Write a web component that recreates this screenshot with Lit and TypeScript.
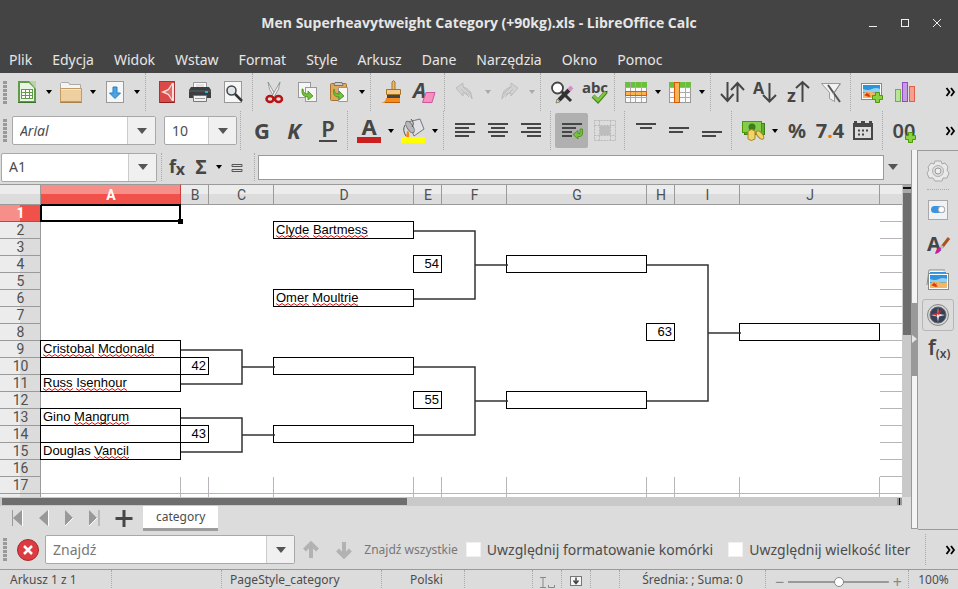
import { LitElement, html, svg, css, nothing, TemplateResult } from "lit";
import { customElement, property } from "lit/decorators.js";
import { classMap } from "lit/directives/class-map.js";

const photo = svg`
  <rect x="1.5" y="3.5" width="20" height="16" fill="#fff" stroke="#8a8a8a"/>
  <rect x="3" y="5" width="17" height="13" fill="#2f93dc"/>
  <path d="M3 9q5 2 9 0t8 0v3H3z" fill="#8fd0f5"/>
  <path d="M3 13q5-2 9-1t8 0v6H3z" fill="#f2b765"/>
  <path d="M7 12l1 2 2-1-1 2 2 1-2 1-3-1-2-1 2-1z" fill="#e03a10"/>`;
const plus = (x: number, y: number) => svg`
  <path transform="translate(${x} ${y})" d="M3.500.5h4v3h3v4h-3v3h-4v-3h-3v-4h3z" fill="#8ad045" stroke="#4e9a06"/>`;
const gridLines = svg`<path d="M1.500 7.500h21M1.500 12.500h21M1.500 17.500h21M6.500 2v20M11.500 2v20M17.500 2v20" stroke="#aaa" fill="none"/>`;

const ICONS: Record<string, TemplateResult> = {
  newsheet: svg`<rect x="3" y="1" width="18" height="22" fill="#5f9b49"/><path d="M5 3h9l5 5v13H5z" fill="#e9f4e2"/>
    <path d="M14 1h7v8z" fill="#b5d8a2"/><rect x="6.500" y="9.500" width="11" height="9" fill="#fff" stroke="#5f9b49"/>
    <path d="M6 12.500h12M6 15.500h12M10.500 9v10M14.500 9v10" stroke="#5f9b49"/><path d="M3 22.500h18" stroke="#3c6e2c"/>`,
  folder: svg`<path d="M1.500 22V3.500l1-1h7l1 2h11V10" fill="#f4f4f4" stroke="#aaa"/><path d="M1.500 8.500h21v13h-21z" fill="#edcfa0" stroke="#c39a60"/>
    <path d="M2 9.500h20" stroke="#f9e6c8"/><path d="M1 22.500h22" stroke="#a9834e"/>`,
  save: svg`<rect x="3.500" y="1.500" width="17" height="21" fill="#f6f6f6" stroke="#999"/><path d="M10 7h4v6h3.500L12 18.500 6.500 13H10z" fill="#4aa3e6" stroke="#2b7fc0"/>`,
  pdf: svg`<rect x="4.500" y="1.500" width="15" height="21" fill="#dc4a48" stroke="#a33"/><path d="M17 3h2v18h-2l-4-6-7-3 7-3z" fill="#f6dede"/><path d="M17 5v14l-3-5-4-2 4-2z" fill="#e26a68"/>
    <path d="M5 22.500h14" stroke="#822"/>`,
  print: svg`<path d="M5.500 9V2.500h13V9" fill="#fafafa" stroke="#999"/><path d="M8 5h8M8 7h8" stroke="#ccc"/><path d="M3 7h18l2 3v8H1v-8z" fill="#3b3f42"/><path d="M1 11h22" stroke="#5d6265"/>
    <rect x="17" y="11" width="3" height="2" fill="#1db7ee"/><path d="M5.500 15.500h13v6h-13z" fill="#f2f2f2" stroke="#777"/><path d="M7 18.500h10" stroke="#999"/>`,
  preview: svg`<rect x="3.500" y="1.500" width="17" height="21" fill="#f6f6f6" stroke="#999"/><circle cx="10.500" cy="10.500" r="4.500" fill="#dfe6ea" stroke="#444" stroke-width="1.500"/><path d="M14 14l7 7" stroke="#333" stroke-width="2.500"/>`,
  cut: svg`<path d="M6 2l8 14-2 1q-6-8-6-15z" fill="#eee" stroke="#888" stroke-width=".8"/><path d="M18 2l-8 14 2 1q6-8 6-15z" fill="#eee" stroke="#888" stroke-width=".8"/>
    <ellipse cx="8" cy="19" rx="3.500" ry="3" fill="none" stroke="#b81414" stroke-width="2.500"/><ellipse cx="16.500" cy="19" rx="3.500" ry="3" fill="none" stroke="#b81414" stroke-width="2.500"/>`,
  copy: svg`<rect x="3.500" y="2.500" width="12" height="15" fill="#f6f6f6" stroke="#999"/><rect x="10.500" y="7.500" width="11" height="14" fill="#f6f6f6" stroke="#999"/>
    <path d="M8 9q0 5 5 5v-3l5 5-5 4v-3q-7 0-6-8z" fill="#73c13c" stroke="#478a1a" stroke-width=".8"/>`,
  paste: svg`<rect x="2.500" y="3.500" width="16" height="17" rx="1" fill="#dfa95c" stroke="#a5732b"/><path d="M7 2.500h7l1 3H6z" fill="#ccc" stroke="#777"/><path d="M10.500 7.500h9l0 14h-9z" fill="#f6f6f6" stroke="#999"/>
    <path d="M6 9q0 5 5 5v-3l5 5-5 4v-3q-7 0-5-8z" fill="#73c13c" stroke="#478a1a" stroke-width=".8"/>`,
  brush: svg`<path d="M12 9V2q1.500-3 3 0v7" fill="#f0b96a" stroke="#a5732b"/><path d="M6.500 9.500h14v5h-14z" fill="#f3c987" stroke="#a5732b"/><rect x="7" y="15" width="13" height="3" fill="#444"/>
    <path d="M6 18h14v5H1q5-1 5-5z" fill="#f58a1f"/><path d="M5 22.500h15" stroke="#b85b0a"/>`,
  eraser: svg`<text x="0" y="18" font-size="21" class="t" font-style="italic">A</text><path d="M13 12.500h9l-3 10H9.500z" fill="#f48fc0" stroke="#d0559a"/>`,
  undo: svg`<path d="M2 8l7-5v4q9 2 9 12-2-6-9-6v3z" fill="#d2d2d2" stroke="#bbb"/><path d="M7 9l8 8M9 7l8 7" stroke="#bbb"/>`,
  redo: svg`<path d="M20 8l-7-5v4q-9 2-9 12 2-6 9-6v3z" fill="#d2d2d2" stroke="#bbb"/><path d="M15 9l-8 8M13 7l-8 7" stroke="#bbb"/>`,
  find: svg`<path d="M11 11l10 10" stroke="#333" stroke-width="3"/><circle cx="7.500" cy="8" r="5.500" fill="#fff" stroke="#444" stroke-width="1.800"/><path d="M19 10L9 20" stroke="#333" stroke-width="4"/><path d="M22 7l-3 3" stroke="#d58fc6" stroke-width="4"/><path d="M6 23l1-4 3 3z" fill="#eed27a" stroke="#555" stroke-width=".6"/>`,
  abc: svg`<text x="12" y="13" text-anchor="middle" font-size="15" class="t">abc</text><path d="M10 16l5 5 8-9" stroke="#458418" stroke-width="4" fill="none"/><path d="M10.500 16l4.500 4.500 7.500-8.500" stroke="#7dc742" stroke-width="2.500" fill="none"/>`,
  rows: svg`<rect x="1.500" y="2.500" width="21" height="20" fill="#fafafa" stroke="#999"/><rect x="1" y="2" width="22" height="5" fill="#6cbf3a"/>${gridLines}<rect x="1.500" y="11.500" width="21" height="4" fill="#f8b355" stroke="#dc5a00"/><path d="M6.500 12v3M11.500 12v3M17.500 12v3" stroke="#dc8a30"/>`,
  cols: svg`<rect x="1.500" y="2.500" width="21" height="20" fill="#fafafa" stroke="#999"/><rect x="1" y="2" width="22" height="5" fill="#6cbf3a"/>${gridLines}<rect x="6.500" y="2.500" width="5" height="20" fill="#f8b355" stroke="#dc5a00"/>`,
  sort: svg`<path d="M7.500 2v19M1 14l6.500 7 6-7M17.500 22V3M11 10l6.500-7 6.500 7" class="s2"/>`,
  sortaz: svg`<text x="0" y="14" font-size="16" class="t">A</text><path d="M16.500 3v18M10 15l6.500 6.500 6.500-6.500" class="s2"/>`,
  sortza: svg`<text x="1" y="22" font-size="18" class="t">z</text><path d="M16.500 22V2M10 8l6.500-6 6.500 6" class="s2"/>`,
  filter: svg`<path d="M2.500 3.500h19l-6 9v9l-5-3v-6z" fill="#f3f3f3" stroke="#999"/><path d="M9 5l12 17" stroke="#555" stroke-width="2"/><path d="M21 4l-7 10" stroke="#888"/>`,
  image: svg`${photo}${plus(12, 12)}`,
  chart: svg`<rect x="2.500" y="9.500" width="5" height="12" fill="#b9e29a" stroke="#6ab23a"/><rect x="9.500" y="2.500" width="5" height="19" fill="#c79be4" stroke="#8d4fbf"/><rect x="16.500" y="6.500" width="5" height="15" fill="#f5a090" stroke="#e0604a"/>`,
  bold: svg`<text x="12" y="20" text-anchor="middle" font-size="22" class="t">G</text>`,
  italic: svg`<text x="11" y="20" text-anchor="middle" font-size="22" class="t" font-style="italic">K</text>`,
  underline: svg`<text x="12" y="18" text-anchor="middle" font-size="22" class="t semi">P</text><path d="M3 22h18" stroke="#464646" stroke-width="2"/>`,
  color: svg`<text x="12" y="16" text-anchor="middle" font-size="22" class="t">A</text><rect x="0" y="18" width="24" height="6" fill="#cc1f1f"/>`,
  fill: svg`<path d="M7 3l12-3 4 10-10 7z" fill="#e2e2e6" stroke="#777"/><ellipse cx="9" cy="8" rx="3" ry="6.500" transform="rotate(-32 9 8)" fill="#b8b8bc" stroke="#777"/><path d="M4 6q-3 5 1 11M10 0q4 4 1 8" fill="none" stroke="#555"/><path d="M6 12q3 0 2 6H5z" fill="#f5851f"/><rect x="0" y="18" width="24" height="6" fill="#ff0"/>`,
  left: svg`<path d="M2 5h20M2 9h14M2 13h20M2 17h14" class="s2"/>`,
  center: svg`<path d="M2 5h20M5 9h14M2 13h20M5 17h14" class="s2"/>`,
  right: svg`<path d="M2 5h20M8 9h14M2 13h20M8 17h14" class="s2"/>`,
  wrap: svg`<path d="M2 5h20M2 9h14M2 13h10M2 17h10" class="s2"/><path d="M20 10h2.500v5q0 2-2.500 2.500h-2v2.500l-5-4.500 5-4v3h2z" fill="#73c13c" stroke="#478a1a" stroke-width=".8"/>`,
  merge: svg`<path d="M1.500 1.500h21v20h-21zM1.500 6.500h21M1.500 16.500h21M6.500 1.500v20M17.500 1.500v20" fill="none" stroke="#b8b8b8" stroke-dasharray="2 1"/><rect x="7" y="7" width="10" height="9" fill="#bdbdbd"/>`,
  top: svg`<path d="M2 5h20M6 9h12" class="s2"/>`,
  middle: svg`<path d="M2 9h20M2 13h14" class="s2"/>`,
  bottom: svg`<path d="M2 13h20M2 17h14" class="s2"/>`,
  money: svg`<rect x="3.500" y="4.500" width="20" height="11" fill="#5fae2e" stroke="#3f7d1a"/><rect x="1.500" y="2.500" width="19" height="11" fill="#83cc4c" stroke="#4e9a06"/><circle cx="11" cy="8" r="3.500" fill="#3f7d1a"/>
    <path d="M7 12q4-3 7 0v8q-4 3-7 0z" fill="#f0d568" stroke="#a8862a"/><ellipse cx="19" cy="16" rx="2.500" ry="5" transform="rotate(-40 19 16)" fill="#f0d568" stroke="#a8862a"/>`,
  percent: svg`<text x="12" y="19" text-anchor="middle" font-size="20" class="t">%</text>`,
  number: svg`<text x="12" y="19" text-anchor="middle" font-size="20" class="t">7<tspan fill="#f57900">.</tspan>4</text>`,
  date: svg`<path d="M3 3.500h3M18 3.500h3M10 3.500h4" stroke="#464646" stroke-width="3"/><rect x="3" y="5" width="18" height="15" fill="#dcdcdc" stroke="#464646" stroke-width="2"/><path d="M2 6h20" stroke="#464646" stroke-width="4"/><path d="M7 11.500h11M7 15.500h8" stroke="#464646" stroke-width="2" stroke-dasharray="2 2"/>`,
  decimals: svg`<text x="12" y="19" text-anchor="middle" font-size="20" class="t semi">00</text>${plus(13, 13)}`,
  gear: svg`<path d="M9 2h6l1 3 3-1 3 4-1 3 2 3-2 5-4 0-1 3H9l-2-3-4 0-2-5 2-3-1-3 3-4 3 1z" fill="#e9e9e9" stroke="#a8a8a8"/><circle cx="12" cy="12" r="5.500" fill="#ddd" stroke="#b0b0b0"/><circle cx="12" cy="12" r="3" fill="#eee" stroke="#999"/>`,
  toggle: svg`<rect x="2.500" y="2.500" width="19" height="19" fill="#f0f2f4" stroke="#a8a8a8"/><rect x="5" y="8" width="14" height="7" rx="3.500" fill="#3d93e0"/><circle cx="15.500" cy="11.500" r="3.200" fill="#fff" stroke="#aaa"/>`,
  styles: svg`<text x="1" y="18" font-size="20" class="t">A</text><path d="M23 5l-7 9" stroke="#a8551d" stroke-width="3"/><path d="M17 13l-3 3" stroke="#bbb" stroke-width="3"/><path d="M15 15q0 5-6 6 1-5 4-7z" fill="#c4209a"/>`,
  gallery: svg`<path d="M1 17L3 2h16" fill="#fff" stroke="#888"/><path d="M4 4h16v6H4z" fill="#2f93dc"/><g transform="translate(1 2)">${photo}</g>`,
  compass: svg`<circle cx="12" cy="12" r="10.500" fill="#d4d6d8" stroke="#888"/><circle cx="12" cy="12" r="8" fill="#39415a" stroke="#666"/><path d="M12 5l1 6 6 1-6 1.500-1 5.500-1-5.500-6-1.500 6-1z" fill="#e8e8e8"/><path d="M16 6l-3 6-2-1zM12 5l1 6h-2zM6 11l5-1v3z" fill="#cf2b2b"/>`,
  functions: svg`<text x="2" y="17" font-size="21" class="t semi">f<tspan font-size="12" dy="3">(x)</tspan></text>`,
  fx: svg`<text x="12" y="18" text-anchor="middle" font-size="18" class="t">f<tspan font-size="16" dy="2">x</tspan></text>`,
  sum: svg`<text x="12" y="19" text-anchor="middle" font-size="19" class="t">Σ</text>`,
  equals: svg`<path d="M7 9.500h10v2H7zM7 14.500h10v2H7z" fill="none" stroke="#555"/>`,
  first: svg`<path d="M4.500 4v16" stroke="#999"/><path d="M14 4v16L5 12z" fill="#999"/><path d="M14.500 4v16" stroke="#fff"/>`,
  prev: svg`<path d="M15 4v16L6 12z" fill="#999"/><path d="M15.500 4v16" stroke="#fff"/>`,
  next: svg`<path d="M7 4v16l8-8z" fill="#999"/><path d="M7 20l8-8" stroke="#fff"/>`,
  last: svg`<path d="M6 4v16l8-8z" fill="#999"/><path d="M6 20l8-8" stroke="#fff"/><path d="M16 4v16" stroke="#999"/>`,
  add: svg`<path d="M12 4v17M3.500 12.500h17" stroke="#464646" stroke-width="3"/>`,
  close: svg`<circle cx="12" cy="12" r="10.500" fill="#dd3a41" stroke="#a52a30"/><path d="M8 8l8 8M16 8l-8 8" stroke="#fff" stroke-width="2.500"/>`,
  up: svg`<path d="M12 20V6M5.500 12L12 5.500 18.500 12" stroke="#b2b2b2" stroke-width="4" fill="none"/>`,
  down: svg`<path d="M12 4v14M5.500 12l6.500 6.500 6.500-6.500" stroke="#b2b2b2" stroke-width="4" fill="none"/>`,
  minimize: svg`<path d="M8 15.500h8" stroke="#eee"/>`,
  maximize: svg`<rect x="8.500" y="8.500" width="7" height="7" fill="none" stroke="#eee"/>`,
  exit: svg`<path d="M8 8l8 8M16 8l-8 8" stroke="#eee"/>`,
  cursor: svg`<path d="M5 7.500h6M8 8v9M5 17.500h6M13.500 15v2.500h6V15" stroke="#888" fill="none"/>`,
  saved: svg`<rect x="6.500" y="6.500" width="11" height="9" fill="#f4f4f4" stroke="#777"/><path d="M12 7.500v5M9.500 10.500l2.500 3 2.500-3" stroke="#444" stroke-width="1.500" fill="none"/>`,
};

const shared = css`
  * { box-sizing: border-box; }
  button, input, select { font: inherit; color: inherit; margin: 0; padding: 0; border: 0; background: none; border-radius: 0; }
  svg { display: block; flex: none; overflow: visible; }
  .t { font-family: "Noto Sans", "Open Sans", sans-serif; font-weight: 700; fill: #464646; }
  .semi { font-weight: 600; }
  .s2 { stroke: #464646; stroke-width: 2; fill: none; }
`;

const icon = (name: string) => html`<svg width="24" height="24" viewBox="0 0 24 24" aria-hidden="true">${ICONS[name]}</svg>`;
const caret = html`<svg width="10" height="6" viewBox="0 0 10 6" aria-hidden="true"><path d="M0 0h10L5 6z" fill="#555"/></svg>`;
const more = html`<button class="more" aria-label="Więcej"><svg width="9" height="8" viewBox="0 0 9 8"><path d="M.5 0L3.500 4 .5 8M5 0l3 4-3 4" fill="none" stroke="#000" stroke-width="1.800"/></svg></button>`;

type Tool = { name: string; label: string; menu?: boolean; off?: boolean; on?: boolean };
const t = (name: string, label: string, extra: Partial<Tool> = {}): Tool => ({ name, label, ...extra });
const menu = { menu: true };

@customElement("tool-group")
class ToolGroup extends LitElement {
  @property({ attribute: false }) groups: Tool[][] = [];
  static styles = [shared, css`
    :host { display: flex; align-items: stretch; min-width: 0; overflow: hidden; flex: 1; }
    .group { display: flex; align-items: center; flex: none; }
    .group + .group { border-left: 1px dotted #aaa; margin-left: 3px; padding-left: 4px; }
    .tool { width: 33px; height: 35px; display: flex; align-items: center; justify-content: center; border-radius: 2px; }
    .on { background: #b0b0b0; }
    .drop { width: 11px; height: 35px; display: flex; align-items: center; justify-content: center; color: #000; }
    .off { color: #aaa; }
  `];
  render() {
    return this.groups.map((g) => html`<div class="group">${g.map((x) => html`
      <button class=${classMap({ tool: true, on: !!x.on })} aria-label=${x.label} ?disabled=${x.off}>${icon(x.name)}</button>
      ${x.menu ? html`<button class=${classMap({ drop: true, off: !!x.off })} aria-label="${x.label} – opcje">
        <svg width="6" height="4" viewBox="0 0 6 4"><path d="M0 0h6L3 4z" fill="currentColor"/></svg></button>` : nothing}`)}
    </div>`);
  }
}

type Cell = { text?: string; bad?: string[]; num?: boolean };
const COLS = "ABCDEFGHIJ".split("");
const ROWS = Array.from({ length: 17 }, (_, i) => i + 1);
const CELLS: Record<string, Cell> = {
  D2: { text: "Clyde Bartmess", bad: ["Clyde", "Bartmess"] },
  E4: { text: "54", num: true },
  G4: {},
  D6: { text: "Omer Moultrie", bad: ["Omer", "Moultrie"] },
  H8: { text: "63", num: true },
  J8: {},
  A9: { text: "Cristobal Mcdonald", bad: ["Cristobal", "Mcdonald"] },
  A10: {},
  B10: { text: "42", num: true },
  D10: {},
  A11: { text: "Russ Isenhour", bad: ["Russ", "Isenhour"] },
  E12: { text: "55", num: true },
  G12: {},
  A13: { text: "Gino Mangrum", bad: ["Mangrum"] },
  A14: {},
  B14: { text: "43", num: true },
  D14: {},
  A15: { text: "Douglas Vancil", bad: ["Vancil"] },
};

@customElement("sheet-grid")
class SheetGrid extends LitElement {
  static styles = [shared, css`
    :host { display: block; position: relative; background: #fff; overflow: hidden; }
    table { width: 100%; table-layout: fixed; border-collapse: separate; border-spacing: 0; }
    .rowhead { width: 41px; }
    .wide { width: 140px; }
    .thin { width: 28px; }
    .mid { width: 65px; }
    th { font: 400 14px/16px Roboto, "Noto Sans", sans-serif; color: #505050; padding: 0 0 0 1px; text-align: center; border-right: 1px solid #9a9a9a; border-bottom: 1px solid #9a9a9a; }
    thead th { height: 21px; border-top: 1px solid #9a9a9a; background: linear-gradient(#ececec 50%, #dcdcdc 50%); }
    thead th:last-child { border-right: 0; }
    tbody th { height: 17px; background: linear-gradient(90deg, #ececec 50%, #dcdcdc 50%); }
    thead .sel { background: linear-gradient(#f68e8a 50%, #f0524b 50%); color: #fff; font-weight: 700; border-right-color: #c8403a; }
    tbody .sel { background: linear-gradient(90deg, #f68e8a 50%, #f0524b 50%); color: #fff; font-weight: 700; border-bottom-color: #c8403a; }
    td { padding: 0 2px; height: 17px; font: 13px/15px "Liberation Sans", Arial, sans-serif; color: #000; white-space: nowrap; vertical-align: top; }
    .edge { border-bottom: 1px solid #b9b4b9; }
    .plain { border-right: 1px solid #b9b4b9; border-bottom: 1px solid #b9b4b9; }
    .box { border-right: 1px solid #000; border-bottom: 1px solid #000; box-shadow: -1px 0 #000, 0 -1px #000, -1px -1px #000; }
    .num { text-align: right; }
    .bad {
      padding-bottom: 1px;
      background: url("data:image/svg+xml,%3Csvg xmlns='http://www.w3.org/2000/svg' width='6' height='3'%3E%3Cpath d='M-1 -.2L0 .5L3 2.500L6 .5L7 -.2' fill='none' stroke='%23e61414'/%3E%3C/svg%3E") left bottom repeat-x;
    }
    .cursor { position: relative; border-right: 2px solid #000; border-bottom: 2px solid #000; box-shadow: -1px 0 #000, 0 -1px #000, inset 1px 1px #000; }
    .cursor::after { content: ""; position: absolute; right: -4px; bottom: -4px; width: 5px; height: 5px; background: #000; }
    .rest th, .rest td { height: 3px; line-height: 0; border-bottom: 0; }
    .links { position: absolute; left: 0; top: 0; pointer-events: none; }
    .links path { fill: none; stroke: #333; stroke-width: 1.5; }
  `];
  cell(id: string, row: number) {
    const c = CELLS[id];
    const words = c?.text?.split(" ") ?? [];
    return html`<td class=${classMap({ box: !!c, num: !!c?.num, cursor: id === "A1", plain: row >= 17 })}>${words.map((w, i) =>
      html`${i ? " " : ""}${c!.bad?.includes(w) ? html`<span class="bad">${w}</span>` : w}`)}</td>`;
  }
  render() {
    const size = ["wide", "thin", "mid", "wide", "thin", "mid", "wide", "thin", "mid", "wide"];
    return html`
      <table>
        <colgroup><col class="rowhead">${size.map((s) => html`<col class=${s}>`)}<col></colgroup>
        <thead><tr><th></th>${COLS.map((c) => html`<th class=${c === "A" ? "sel" : ""} scope="col">${c}</th>`)}<th></th></tr></thead>
        <tbody>
          ${ROWS.map((r) => html`<tr><th class=${r === 1 ? "sel" : ""} scope="row">${r}</th>${COLS.map((c) => this.cell(c + r, r))}<td class="edge"></td></tr>`)}
          <tr class="rest"><th></th>${COLS.map(() => html`<td class="plain"></td>`)}<td></td></tr>
        </tbody>
      </table>
      <svg class="links" width="902" height="313" viewBox="0 0 902 313" aria-hidden="true">
        <path d="M181 166H242V200H181M242 183H275M181 234H242V268H181M242 251H275
          M414 47H475V115H414M475 81H508M414 183H475V251H414M475 217H508M647 81H708V217H647M708 149H741"/>
      </svg>`;
  }
}

const MAIN: Tool[][] = [
  [t("newsheet", "Nowy", menu), t("folder", "Otwórz", menu), t("save", "Zapisz", menu)],
  [t("pdf", "Eksportuj jako PDF"), t("print", "Drukuj"), t("preview", "Podgląd wydruku")],
  [t("cut", "Wytnij"), t("copy", "Kopiuj"), t("paste", "Wklej", menu)],
  [t("brush", "Klonuj formatowanie"), t("eraser", "Wyczyść formatowanie")],
  [t("undo", "Cofnij", { menu: true, off: true }), t("redo", "Ponów", { menu: true, off: true })],
  [t("find", "Znajdź i zamień"), t("abc", "Pisownia")],
  [t("rows", "Wiersz", menu), t("cols", "Kolumna", menu)],
  [t("sort", "Sortuj"), t("sortaz", "Sortuj rosnąco"), t("sortza", "Sortuj malejąco"), t("filter", "Autofiltr")],
  [t("image", "Obraz"), t("chart", "Wykres")],
];
const FORMAT: Tool[][] = [
  [],
  [t("bold", "Pogrubienie"), t("italic", "Kursywa"), t("underline", "Podkreślenie")],
  [t("color", "Kolor czcionki", menu), t("fill", "Kolor tła", menu)],
  [t("left", "Do lewej"), t("center", "Wyśrodkuj"), t("right", "Do prawej")],
  [t("wrap", "Zawijaj tekst", { on: true }), t("merge", "Scal komórki", { off: true })],
  [t("top", "Do góry"), t("middle", "Wyśrodkuj w pionie"), t("bottom", "Do dołu")],
  [t("money", "Waluta", menu), t("percent", "Procent"), t("number", "Liczba"), t("date", "Data")],
  [t("decimals", "Dodaj miejsce dziesiętne")],
];
const MENUS = ["Plik", "Edycja", "Widok", "Wstaw", "Format", "Style", "Arkusz", "Dane", "Narzędzia", "Okno", "Pomoc"];

@customElement("app-root")
class AppRoot extends LitElement {
  static styles = [shared, css`
    :host { display: flex; flex-direction: column; min-height: 100vh; background: #dcdcdc; color: #4c4c4c; font: 14px/20px "Noto Sans", "Open Sans", sans-serif; overflow: hidden; }
    .title { height: 46px; background: #444; color: #e6e6e6; display: grid; grid-template-columns: 104px 1fr 104px; align-items: center; }
    .title h1 { margin: 0; font: 700 14px/20px "Open Sans", "Noto Sans", sans-serif; text-align: center; white-space: nowrap; }
    .wins { display: flex; gap: 8px; justify-content: flex-end; padding-right: 9px; }
    .menus { height: 27px; background: #444; color: #e6e6e6; display: flex; gap: 20px; padding: 0 9px; align-items: center; }
    .bar { display: flex; height: 39px; padding: 0 3px; }
    .bar.main { height: 38px; }
    .grip { flex: none; width: 4px; height: 23px; align-self: center; background: repeating-linear-gradient(#999 0 3px, #dcdcdc 3px 4px); }
    .main .grip { margin-right: 3px; }
    .more { flex: none; width: 10px; display: flex; align-items: center; justify-content: center; }
    .combo { display: flex; height: 29px; border: 1px solid #a8a8a8; border-radius: 2px; background: #fff; align-self: center; flex: none; }
    .combo select, .combo input { appearance: none; flex: 1; min-width: 0; padding: 0 7px; outline: 0; }
    .combo input::placeholder { color: #777; opacity: 1; }
    .combo .arrow { width: 28px; display: flex; align-items: center; justify-content: center; border-left: 1px solid #ccc; background: #f0f0f0; pointer-events: none; }
    .font { width: 144px; margin: 0 8px 0 5px; font-style: italic; }
    .size { width: 73px; }
    .work { display: flex; align-items: stretch; }
    .left { flex: 1; min-width: 0; }
    .formula { display: flex; height: 34px; align-items: center; padding: 0 9px 0 1px; }
    .formula .combo { width: 156px; }
    .tools { display: flex; align-items: center; height: 28px; margin: 0 3px 0 4px; padding: 0 5px 0 3px; border-left: 1px dotted #aaa; border-right: 1px dotted #aaa; }
    .tools button { width: 24px; display: flex; justify-content: center; }
    .tools .drop { width: 12px; }
    .line { flex: 1; min-width: 0; height: 25px; border: 1px solid #9a9a9a; background: #fff; }
    .expand { width: 18px; display: flex; justify-content: center; }
    .sheet { display: flex; }
    .sheet sheet-grid { flex: 1; min-width: 0; }
    .vbar { width: 9px; background: #c9c9c9; display: flex; flex-direction: column; padding-left: 1px; border-top: 1px solid #9a9a9a; }
    .vbar::before { content: ""; height: 8px; background: linear-gradient(#aaa 2px, #111 2px 4px, #aaa 4px); }
    .vbar i { height: 142px; background: #6e6e6e; }
    .hbar { height: 9px; display: flex; margin-right: 9px; background: #c9c9c9; padding: 1px 0 1px 2px; justify-content: space-between; }
    .hbar i { width: 45%; background: #6e6e6e; }
    .hbar b { width: 5px; background: linear-gradient(90deg, #999 2px, #111 2px 3px, #999 3px); }
    .tabs { height: 26px; display: flex; align-items: flex-start; padding-left: 8px; font-size: 12px; }
    .tabs .step { width: 25px; }
    .tabs .add { width: 30px; margin-left: 1px; padding: 0 3px; }
    .tabs .tab { height: 25px; padding: 0 13px; margin-left: 4px; background: #fff; border-bottom: 3px solid #9c9c9c; line-height: 22px; }
    .split { width: 7px; border: 1px solid #9a9a9a; border-top: 0; background: #f4f4f4; height: 379px; display: flex; align-items: center; }
    .split button { width: 5px; height: 73px; background: #999; display: flex; align-items: center; }
    .side { width: 40px; height: 380px; border-top: 1px solid #9a9a9a; border-bottom: 1px solid #9a9a9a; display: flex; flex-direction: column; align-items: center; padding-top: 4px; }
    .side button { width: 32px; height: 32px; margin-bottom: 3px; display: flex; align-items: center; justify-content: center; border-radius: 3px; flex: none; }
    .side button:first-child { margin-bottom: 0; }
    .side hr { width: 22px; margin: 2px 0 4px; border: 0; border-top: 1px dotted #aaa; }
    .side .on { border: 1px solid #b8b4b8; }
    .findbar { height: 38px; display: flex; align-items: center; padding: 0 3px 2px; border-bottom: 1px solid #9a9a9a; white-space: nowrap; }
    .findbar .stop { margin: 0 5px 0 9px; }
    .findbar .combo { width: 250px; margin-right: 4px; }
    .findbar .arrowbtn { width: 33px; display: flex; justify-content: center; padding-right: 8px; }
    .findbar .all { font-size: 12px; color: #777; margin-right: 8px; }
    .findbar label { display: flex; align-items: center; gap: 6px; margin-right: 15px; }
    .findbar input[type="checkbox"] { appearance: none; width: 15px; height: 15px; background: #fff; border: 1px solid #f0f0f0; }
    .findbar .end { margin-left: auto; height: 31px; width: 30px; border-left: 1px dotted #aaa; display: flex; align-items: center; justify-content: flex-end; }
    .findbar label + .end { margin-left: auto; }
    .status { flex: 1; min-height: 19px; display: flex; align-items: stretch; font-size: 12px; line-height: 19px; padding-left: 10px; white-space: nowrap; }
    .status span { border-right: 1px dotted #aaa; }
    .s1 { width: 102px; } .s2nd { width: 110px; } .s3 { width: 160px; padding-left: 8px; } .s4 { width: 83px; padding-left: 28px; }
    .s5 { width: 68px; } .s6 { width: 29px; } .s7 { flex: 1; } .s8 { width: 29px; }
    .status .ico { display: flex; align-items: center; justify-content: center; }
    .sum { text-align: center; }
    .zoom { display: flex; align-items: center; gap: 4px; width: 143px; padding: 0 6px 0 9px; color: #888; font-size: 16px; }
    .zoom input { appearance: none; flex: 1; min-width: 0; height: 12px; background: linear-gradient(#999, #999) center / 100% 2px no-repeat; }
    .zoom input::-webkit-slider-thumb { appearance: none; width: 10px; height: 10px; border-radius: 50%; background: #fff; border: 1px solid #888; }
    .status .pct { width: 49px; border: 0; text-align: center; }
  `];
  render() {
    return html`
      <header class="title"><span></span><h1>Men Superheavytweight Category (+90kg).xls - LibreOffice Calc</h1>
        <div class="wins">
          <button aria-label="Minimalizuj">${icon("minimize")}</button><button aria-label="Maksymalizuj">${icon("maximize")}</button><button aria-label="Zamknij">${icon("exit")}</button>
        </div>
      </header>
      <nav class="menus">${MENUS.map((m) => html`<button>${m}</button>`)}</nav>
      <div class="bar main"><i class="grip"></i><tool-group .groups=${MAIN}></tool-group>${more}</div>
      <div class="bar"><i class="grip"></i>
        <div class="combo font"><select aria-label="Nazwa czcionki"><option>Arial</option></select><span class="arrow">${caret}</span></div>
        <div class="combo size"><select aria-label="Rozmiar czcionki"><option>10</option></select><span class="arrow">${caret}</span></div>
        <tool-group .groups=${FORMAT}></tool-group>${more}
      </div>
      <main class="work">
        <div class="left">
          <div class="formula">
            <div class="combo"><input aria-label="Pole nazwy" value="A1"><span class="arrow">${caret}</span></div>
            <div class="tools">
              <button aria-label="Kreator funkcji">${icon("fx")}</button><button aria-label="Suma">${icon("sum")}</button>
              <button class="drop" aria-label="Suma – opcje"><svg width="6" height="4" viewBox="0 0 6 4"><path d="M0 0h6L3 4z"/></svg></button>
              <button aria-label="Formuła">${icon("equals")}</button>
            </div>
            <input class="line" aria-label="Wiersz wprowadzania">
            <button class="expand" aria-label="Rozwiń pasek formuły">${caret}</button>
          </div>
          <div class="sheet"><sheet-grid></sheet-grid><div class="vbar"><i></i></div></div>
          <div class="hbar"><i></i><b></b></div>
          <div class="tabs">
            ${["first", "prev", "next", "last"].map((n) => html`<button class="step" aria-label=${n}>${icon(n)}</button>`)}
            <button class="add" aria-label="Dodaj arkusz">${icon("add")}</button>
            <button class="tab">category</button>
          </div>
        </div>
        <div class="split"><button aria-label="Ukryj panel boczny"><svg width="5" height="8" viewBox="0 0 5 8"><path d="M0 0l5 4-5 4z" fill="#e6e6e6"/></svg></button></div>
        <aside class="side">
          <button aria-label="Ustawienia panelu">${icon("gear")}</button><hr>
          <button aria-label="Właściwości">${icon("toggle")}</button>
          <button aria-label="Style">${icon("styles")}</button>
          <button aria-label="Galeria">${icon("gallery")}</button>
          <button class="on" aria-label="Nawigator">${icon("compass")}</button>
          <button aria-label="Funkcje">${icon("functions")}</button>
        </aside>
      </main>
      <section class="findbar"><i class="grip"></i>
        <button class="stop" aria-label="Zamknij pasek">${icon("close")}</button>
        <div class="combo"><input aria-label="Znajdź" placeholder="Znajdź"><span class="arrow">${caret}</span></div>
        <button class="arrowbtn" aria-label="Znajdź poprzednie">${icon("up")}</button><button class="arrowbtn" aria-label="Znajdź następne">${icon("down")}</button>
        <button class="all">Znajdź wszystkie</button>
        <label><input type="checkbox">Uwzględnij formatowanie komórki</label>
        <label><input type="checkbox">Uwzględnij wielkość liter</label>
        <div class="end">${more}</div>
      </section>
      <footer class="status">
        <span class="s1">Arkusz 1 z 1</span><span class="s2nd"></span><span class="s3">PageStyle_category</span><span class="s4">Polski</span>
        <span class="s5"></span><span class="s6 ico">${icon("cursor")}</span><span class="s8 ico">${icon("saved")}</span><span class="s8"></span>
        <span class="sum s7">Średnia: ; Suma: 0</span>
        <span class="zoom">−<input type="range" min="20" max="180" value="100" aria-label="Powiększenie">+</span>
        <span class="pct">100%</span>
      </footer>`;
  }
}
